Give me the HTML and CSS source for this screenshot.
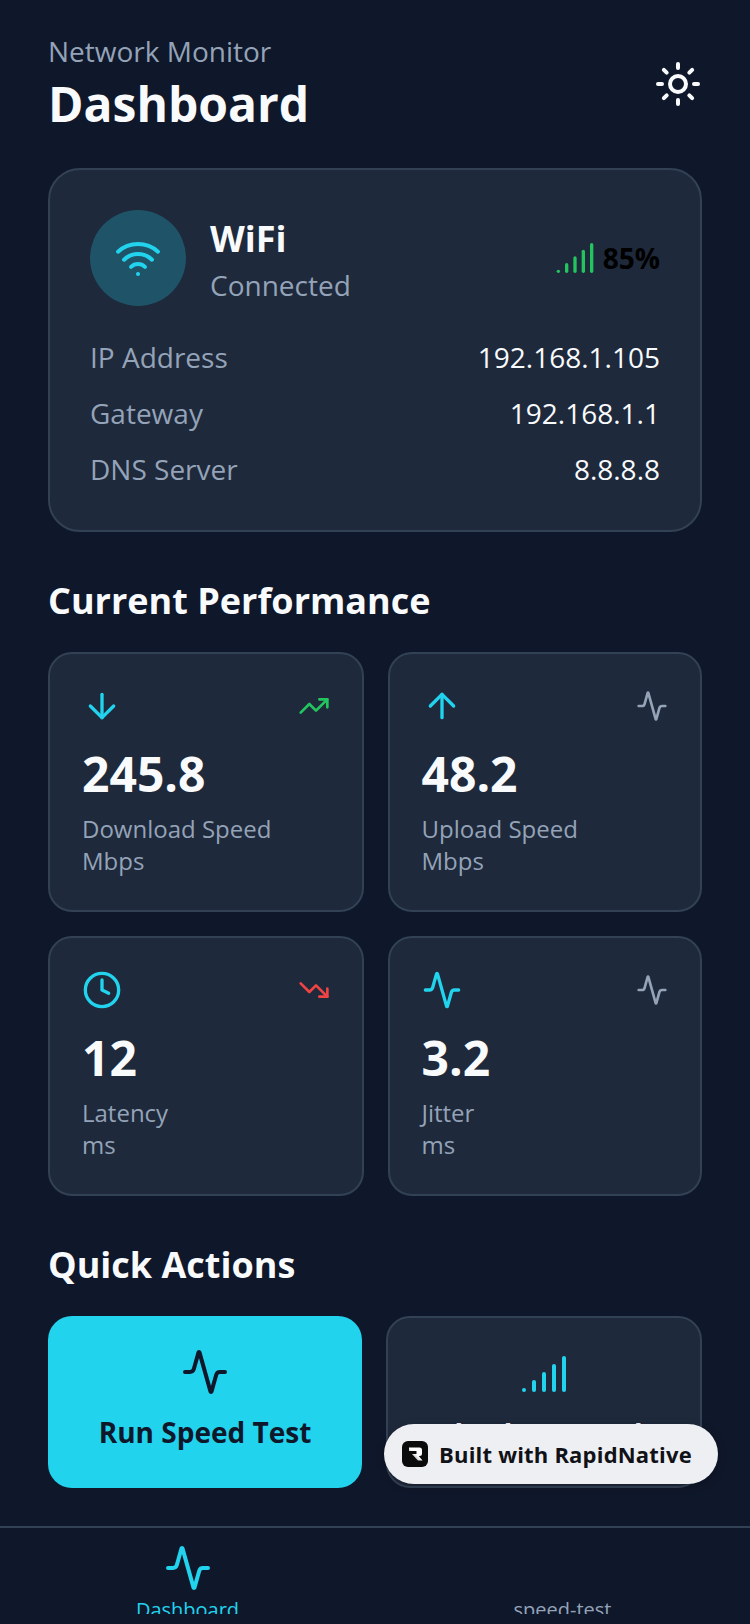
FILE: index.html
```html
<!DOCTYPE html>
<html lang="en">
<head>
    <meta charset="UTF-8">
    <meta name="viewport" content="width=device-width, initial-scale=1.0">
    <title>Network Monitor</title>
    <link rel="stylesheet" href="styles.css">
</head>
<body>

    <svg class="icon-defs" width="0" height="0">
        <defs>
            <symbol id="i-activity" viewBox="0 0 24 24"><path d="M22 12h-2.48a2 2 0 0 0-1.93 1.46l-2.35 8.36a.25.25 0 0 1-.48 0L9.24 2.18a.25.25 0 0 0-.48 0l-2.35 8.36A2 2 0 0 1 4.49 12H2"/></symbol>
            <symbol id="i-signal" viewBox="0 0 24 24"><path d="M2 20h.01"/><path d="M7 20v-4"/><path d="M12 20v-8"/><path d="M17 20V8"/><path d="M22 4v16"/></symbol>
        </defs>
    </svg>

    <div class="screen">
        <header class="header">
            <div>
                <p class="eyebrow">Network Monitor</p>
                <h1>Dashboard</h1>
            </div>
            <svg class="icon icon-48 white" viewBox="0 0 24 24"><circle cx="12" cy="12" r="4"/><path d="M12 2v2"/><path d="M12 20v2"/><path d="m4.93 4.93 1.41 1.41"/><path d="m17.66 17.66 1.41 1.41"/><path d="M2 12h2"/><path d="M20 12h2"/><path d="m6.34 17.66-1.41 1.41"/><path d="m19.07 4.93-1.41 1.41"/></svg>
        </header>

        <!-- Connection card -->
        <section class="card conn-card">
            <div class="conn-top">
                <div class="conn-circle">
                    <svg class="icon icon-48 cyan" viewBox="0 0 24 24"><path d="M12 20h.01"/><path d="M2 8.82a15 15 0 0 1 20 0"/><path d="M5 12.859a10 10 0 0 1 14 0"/><path d="M8.5 16.429a5 5 0 0 1 7 0"/></svg>
                </div>
                <div class="conn-name">
                    <h3>WiFi</h3>
                    <p>Connected</p>
                </div>
                <div class="conn-signal">
                    <svg class="icon icon-40 green"><use href="#i-signal"/></svg>
                    <span>85%</span>
                </div>
            </div>
            <div class="conn-rows">
                <div class="conn-row"><span>IP Address</span><strong>192.168.1.105</strong></div>
                <div class="conn-row"><span>Gateway</span><strong>192.168.1.1</strong></div>
                <div class="conn-row"><span>DNS Server</span><strong>8.8.8.8</strong></div>
            </div>
        </section>

        <h2>Current Performance</h2>
        <section class="stats">
            <div class="card stat">
                <div class="stat-top">
                    <svg class="icon icon-40 cyan" viewBox="0 0 24 24"><path d="M12 5v14"/><path d="m19 12-7 7-7-7"/></svg>
                    <svg class="icon icon-32 green" viewBox="0 0 24 24"><polyline points="22 7 13.5 15.5 8.5 10.5 2 17"/><polyline points="16 7 22 7 22 13"/></svg>
                </div>
                <div class="stat-value">245.8</div>
                <div class="stat-label">Download Speed<br>Mbps</div>
            </div>
            <div class="card stat">
                <div class="stat-top">
                    <svg class="icon icon-40 cyan" viewBox="0 0 24 24"><path d="m5 12 7-7 7 7"/><path d="M12 19V5"/></svg>
                    <svg class="icon icon-32 gray"><use href="#i-activity"/></svg>
                </div>
                <div class="stat-value">48.2</div>
                <div class="stat-label">Upload Speed<br>Mbps</div>
            </div>
            <div class="card stat">
                <div class="stat-top">
                    <svg class="icon icon-40 cyan" viewBox="0 0 24 24"><circle cx="12" cy="12" r="10"/><polyline points="12 6 12 12 16 14"/></svg>
                    <svg class="icon icon-32 red" viewBox="0 0 24 24"><polyline points="22 17 13.5 8.5 8.5 13.5 2 7"/><polyline points="16 17 22 17 22 11"/></svg>
                </div>
                <div class="stat-value">12</div>
                <div class="stat-label">Latency<br>ms</div>
            </div>
            <div class="card stat">
                <div class="stat-top">
                    <svg class="icon icon-40 cyan"><use href="#i-activity"/></svg>
                    <svg class="icon icon-32 gray"><use href="#i-activity"/></svg>
                </div>
                <div class="stat-value">3.2</div>
                <div class="stat-label">Jitter<br>ms</div>
            </div>
        </section>

        <h2>Quick Actions</h2>
        <section class="actions">
            <div class="action action-primary">
                <svg class="icon icon-48 navy"><use href="#i-activity"/></svg>
                <span>Run Speed Test</span>
            </div>
            <div class="card action">
                <svg class="icon icon-48 cyan"><use href="#i-signal"/></svg>
                <span>Check Network</span>
            </div>
        </section>
    </div>

    <!-- Bottom tabs -->
    <nav class="tabbar">
        <div class="tab tab-active">
            <svg class="icon icon-48 cyan"><use href="#i-activity"/></svg>
            <div class="tab-label">Dashboard</div>
        </div>
        <div class="tab">
            <div class="tab-icon"></div>
            <div class="tab-label">speed-test</div>
        </div>
    </nav>

    <div class="badge">
        <svg class="badge-logo" viewBox="0 0 26 26">
            <defs>
                <linearGradient id="logo-fade" x1="0" y1="1" x2="1" y2="0">
                    <stop offset="0" stop-color="#55565a"/>
                    <stop offset="0.5" stop-color="#fff"/>
                </linearGradient>
            </defs>
            <rect width="26" height="26" rx="6" fill="#0b0b0c"/>
            <path d="M7 6.5h10.5a2.5 2.5 0 0 1 2.5 2.5v3.500a2.500 2.500 0 0 1-2.500 2.500h-.8l3.800 4.500h-4.600l-6-6.500h4.600v-3H7z" fill="url(#logo-fade)"/>
        </svg>
        <span>Built with RapidNative</span>
    </div>

</body>
</html>
```

FILE: styles.css
```css
* { margin: 0; padding: 0; box-sizing: border-box; }
html, body {
    height: 1624px;
    overflow: hidden;
}
body {
    position: relative;
    display: flex;
    flex-direction: column;
    background: #0f172a;
    font-family: "Open Sans", sans-serif;
    color: #f8fafc;
}
.icon-defs {
    position: absolute;
}

/* Icons */
.icon {
    display: block;
    flex-shrink: 0;
    fill: none;
    stroke: currentColor;
    stroke-width: 2;
    stroke-linecap: round;
    stroke-linejoin: round;
}
.icon-48 { width: 48px; height: 48px; }
.icon-40 { width: 40px; height: 40px; }
.icon-32 { width: 32px; height: 32px; }
.white { color: #f8fafc; }
.cyan { color: #22d3ee; }
.green { color: #22c55e; }
.gray { color: #94a3b8; }
.red { color: #ef4444; }
.navy { color: #0f172a; }

.screen {
    flex: 1;
    padding: 31px 48px 0;
    overflow: hidden;
}
.header {
    display: flex;
    justify-content: space-between;
    align-items: center;
    margin-bottom: 32px;
}
.eyebrow {
    font-size: 28px;
    line-height: 40px;
    margin-bottom: 1px;
    color: #94a3b8;
}
h1 {
    font-size: 48px;
    line-height: 64px;
    font-weight: 700;
}
h2 {
    font-size: 36px;
    line-height: 40px;
    font-weight: 700;
    margin: 49px 0 31px;
}

.card {
    background: #1e293b;
    border: 2px solid #334155;
}

/* Connection card */
.conn-card {
    padding: 40px 40px 41px;
    border-radius: 32px;
}
.conn-top {
    display: flex;
    align-items: center;
    margin-bottom: 31px;
}
.conn-circle {
    width: 96px;
    height: 96px;
    border-radius: 50%;
    background: rgba(34, 211, 238, 0.25);
    display: flex;
    align-items: center;
    justify-content: center;
    margin-right: 24px;
}
.conn-name {
    flex: 1;
    padding-top: 6px;
}
.conn-name h3 {
    font-size: 36px;
    line-height: 46px;
    margin-bottom: 2px;
    font-weight: 700;
}
.conn-name p {
    font-size: 28px;
    line-height: 42px;
    color: #94a3b8;
}
.conn-signal {
    display: flex;
    align-items: center;
    gap: 8px;
    font-size: 28px;
    font-weight: 700;
    color: #000;
}
.conn-rows {
    display: flex;
    flex-direction: column;
    gap: 16px;
}
.conn-row {
    display: flex;
    justify-content: space-between;
    font-size: 28px;
    line-height: 40px;
    color: #94a3b8;
}
.conn-row strong {
    font-weight: 400;
    color: #f8fafc;
}

/* Stat cards */
.stats {
    display: grid;
    grid-template-columns: 315.5px 314.5px;
    gap: 24px;
}
.stat {
    height: 260px;
    padding: 32px;
    border-radius: 24px;
}
.stat-top {
    display: flex;
    justify-content: space-between;
    align-items: center;
    margin-bottom: 12px;
}
.stat-value {
    font-size: 48px;
    line-height: 72px;
    font-weight: 700;
    margin-bottom: 3px;
}
.stat-label {
    font-size: 24px;
    line-height: 32px;
    color: #94a3b8;
}

/* Quick actions */
.actions {
    display: grid;
    grid-template-columns: 314px 316px;
    gap: 24px;
}
.action {
    height: 172px;
    border-radius: 24px;
    padding-top: 32px;
    display: flex;
    flex-direction: column;
    align-items: center;
    gap: 16px;
    font-size: 28px;
    line-height: 40px;
    font-weight: 700;
}
.action-primary {
    background: #22d3ee;
    color: #0f172a;
}

/* Tab bar */
.tabbar {
    height: 98px;
    padding: 16px 0 10px;
    border-top: 2px solid #334155;
    display: flex;
}
.tab {
    flex: 1;
    display: flex;
    flex-direction: column;
    align-items: center;
    overflow: hidden;
    color: #94a3b8;
}
.tab-icon {
    height: 48px;
    flex-shrink: 0;
}
.tab-label {
    flex-shrink: 0;
    margin-top: 4px;
    font-size: 20px;
    line-height: 28px;
}
.tab-active {
    color: #22d3ee;
}

/* Floating badge */
.badge {
    position: absolute;
    left: 384px;
    top: 1424px;
    width: 334px;
    height: 60px;
    border-radius: 30px;
    background: #eeeff2;
    box-shadow: 0 2px 8px rgba(0, 0, 0, 0.25);
    display: flex;
    align-items: center;
    padding-left: 18px;
    gap: 11px;
    font-size: 22px;
    letter-spacing: 0.2px;
    font-weight: 700;
    color: #111217;
}
.badge-logo {
    width: 26px;
    height: 26px;
    flex-shrink: 0;
}
```
